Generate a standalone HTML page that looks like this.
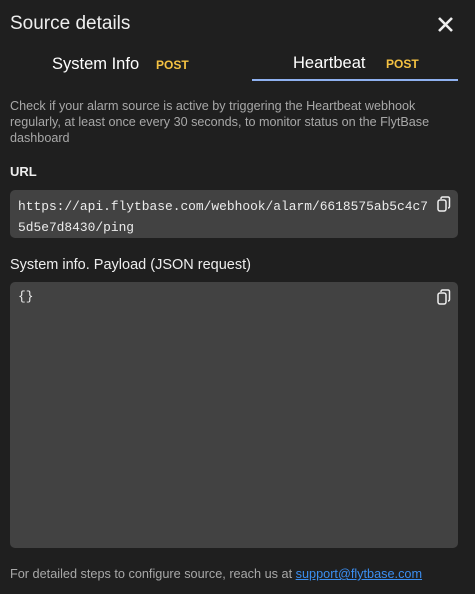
<!DOCTYPE html>
<html><head><style>
body{margin:0;width:475px;height:594px;background:#1f1f1f;font-family:"Liberation Sans",sans-serif;position:relative;overflow:hidden;color:#eee}
.a{position:absolute;white-space:nowrap}
.mono{font-family:"Liberation Mono",monospace;font-size:12.9px;color:#ececec}
.post{color:#f5c242;font-size:12px;font-weight:bold}
.box{position:absolute;left:10px;width:448px;background:#424242;border-radius:5px}
</style></head><body>
<div class="a" style="left:10px;top:13px;font-size:19px;color:#eee">Source details</div>
<svg class="a" style="left:437px;top:16px" width="17" height="17" viewBox="0 0 17 17"><path d="M2 2L15 15M15 2L2 15" stroke="#eee" stroke-width="2.6"/></svg>
<div class="a" style="left:52px;top:55px;font-size:16.5px;color:#fff">System Info</div>
<div class="a post" style="left:156px;top:58px">POST</div>
<div class="a" style="left:293px;top:54px;font-size:16.5px;color:#fff">Heartbeat</div>
<div class="a post" style="left:386px;top:57px">POST</div>
<div class="a" style="left:252px;top:79px;width:206px;height:2px;background:#8fb1f0"></div>
<div class="a" style="left:10px;top:98px;font-size:12.6px;line-height:16px;color:#a8a8a8">Check if your alarm source is active by triggering the Heartbeat webhook<br>regularly, at least once every 30 seconds, to monitor status on the FlytBase<br>dashboard</div>
<div class="a" style="left:10px;top:164px;font-size:13px;font-weight:bold;color:#eee">URL</div>
<div class="box" style="top:190px;height:48px"></div>
<div class="a mono" style="left:18px;top:196px;line-height:21px">https://api.flytbase.com/webhook/alarm/6618575ab5c4c7<br>5d5e7d8430/ping</div>
<svg class="a" style="left:437px;top:196px" width="14" height="16" viewBox="0 0 14 16"><rect x="1" y="4" width="8" height="11" rx="2" fill="none" stroke="#eee" stroke-width="1.5"/><path d="M4 3V2.5A1.5 1.5 0 0 1 5.5 1H11A1.5 1.5 0 0 1 12.5 2.5V10.5A1.5 1.5 0 0 1 11 12" fill="none" stroke="#eee" stroke-width="1.5"/></svg>
<div class="a" style="left:10px;top:257px;font-size:14.5px;color:#eee">System info. Payload (JSON request)</div>
<div class="box" style="top:282px;height:266px"></div>
<div class="a mono" style="left:18px;top:289px">{}</div>
<svg class="a" style="left:437px;top:289px" width="14" height="16" viewBox="0 0 14 16"><rect x="1" y="4" width="8" height="11" rx="2" fill="none" stroke="#eee" stroke-width="1.5"/><path d="M4 3V2.5A1.5 1.5 0 0 1 5.5 1H11A1.5 1.5 0 0 1 12.5 2.5V10.5A1.5 1.5 0 0 1 11 12" fill="none" stroke="#eee" stroke-width="1.5"/></svg>
<div class="a" style="left:10px;top:567px;font-size:12.7px;color:#a8a8a8">For detailed steps to configure source, reach us at <span style="color:#3b8ef0;text-decoration:underline">support@flytbase.com</span></div>
</body></html>
